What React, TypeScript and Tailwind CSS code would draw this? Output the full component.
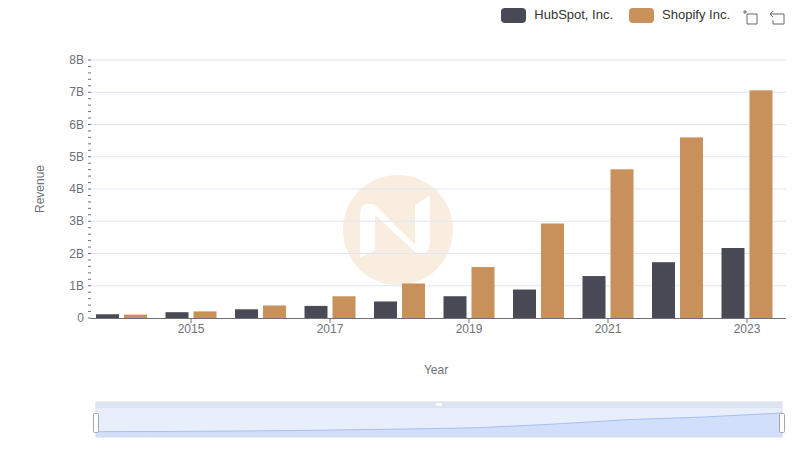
const hub = [0.116, 0.18, 0.27, 0.375, 0.513, 0.675, 0.883, 1.3, 1.73, 2.17];
const shop = [0.105, 0.205, 0.389, 0.673, 1.07, 1.58, 2.93, 4.61, 5.6, 7.06];

const X0 = 91;
const X1 = 786;
const Y0 = 318;
const PER_B = 32.25;
const step = (X1 - X0) / 10;

function yOf(v: number) {
  return Y0 - v * PER_B;
}

export default function App() {
  const font = { fontFamily: '"Liberation Sans", Arial, sans-serif' };
  const minors: number[] = [];
  for (let i = 0; i <= 40; i++) minors.push(i * 0.2);

  const area = shop
    .map((v, i) => `${96 + (i / 9) * 686},${432 - (v / 7.06) * 19}`)
    .join(" L");

  return (
    <div className="relative w-[800px] h-[461px] bg-white overflow-hidden" style={font}>
      <div className="flex items-center justify-end gap-2 pt-[4px] pr-[14px] text-[13px] text-[#333]">
        <span className="w-[25px] h-[15px] rounded-[4px] bg-[#4a4a56]" />
        <span className="mr-2">HubSpot, Inc.</span>
        <span className="w-[25px] h-[15px] rounded-[4px] bg-[#c8905a]" />
        <span>Shopify Inc.</span>
        <svg width="18" height="18" viewBox="0 0 18 18" className="ml-1 mt-1" fill="none" stroke="#666">
          <path d="M1 4h4M3 2v4M5 6h10v10H5z" />
        </svg>
        <svg width="18" height="18" viewBox="0 0 18 18" className="mt-1" fill="none" stroke="#666">
          <path d="M5 3L2 6l3 3M2 6h14v10H5v-4" />
        </svg>
      </div>
      <svg width="800" height="461" className="absolute left-0 top-0 pointer-events-none">
        {/* watermark */}
        <g opacity="0.9">
          <circle cx="398" cy="230" r="55" fill="#f8ecdc" />
          <path d="M360 258 L360 215 Q360 200 375 205 L415 245 L415 205 L430 195 L430 240 Q430 258 415 252 L375 215 L375 250 Z" fill="#ffffff" />
        </g>
        {[1, 2, 3, 4, 5, 6, 7, 8].map((b) => (
          <line key={b} x1={X0} x2={X1} y1={yOf(b)} y2={yOf(b)} stroke="#e0e6f1" />
        ))}
        {minors.map((m) => (
          <line key={m} x1={88} x2={91} y1={yOf(m)} y2={yOf(m)} stroke="#6e7079" />
        ))}
        {[0, 1, 2, 3, 4, 5, 6, 7, 8].map((b) => (
          <text key={b} x={84} y={yOf(b) + 4} fontSize="12" fill="#6e7079" textAnchor="end">
            {b === 0 ? "0" : `${b}B`}
          </text>
        ))}
        {hub.map((v, i) => (
          <rect key={"h" + i} x={X0 + i * step + 5} y={yOf(v)} width={23} height={v * PER_B} fill="#4a4a56" />
        ))}
        {shop.map((v, i) => (
          <rect key={"s" + i} x={X0 + i * step + 33} y={yOf(v)} width={23} height={v * PER_B} fill="#c8905a" />
        ))}
        <line x1={X0} x2={X1} y1={Y0 + 0.5} y2={Y0 + 0.5} stroke="#6e7079" />
        {[1, 3, 5, 7, 9].map((i) => (
          <g key={i}>
            <line x1={X0 + i * step + 30.5} x2={X0 + i * step + 30.5} y1={Y0} y2={Y0 + 5} stroke="#6e7079" />
            <text x={X0 + i * step + 30.5} y={333} fontSize="12" fill="#6e7079" textAnchor="middle">
              {2014 + i}
            </text>
          </g>
        ))}
        <text x={436} y={374} fontSize="12" fill="#6e7079" textAnchor="middle">Year</text>
        <text x={44} y={189} fontSize="12" fill="#6e7079" textAnchor="middle" transform="rotate(-90 44 189)">
          Revenue
        </text>
        {/* data zoom */}
        <rect x={96} y={402} width={686} height={35} fill="#e8eefc" stroke="#d5dcea" />
        <rect x={96} y={402} width={686} height={6} fill="#dde3f1" />
        <rect x={436} y={403} width={6} height={3} fill="#fff" />
        <path d={`M96,432 L${area} L782,437 L96,437 Z`} fill="#d2dffb" />
        <path d={`M${area}`} fill="none" stroke="#a8c0f0" />
        <rect x={93.5} y={413.5} width={5} height={19} rx={1} fill="#fff" stroke="#a0a6b4" />
        <rect x={779.5} y={413.5} width={5} height={19} rx={1} fill="#fff" stroke="#a0a6b4" />
      </svg>
    </div>
  );
}
